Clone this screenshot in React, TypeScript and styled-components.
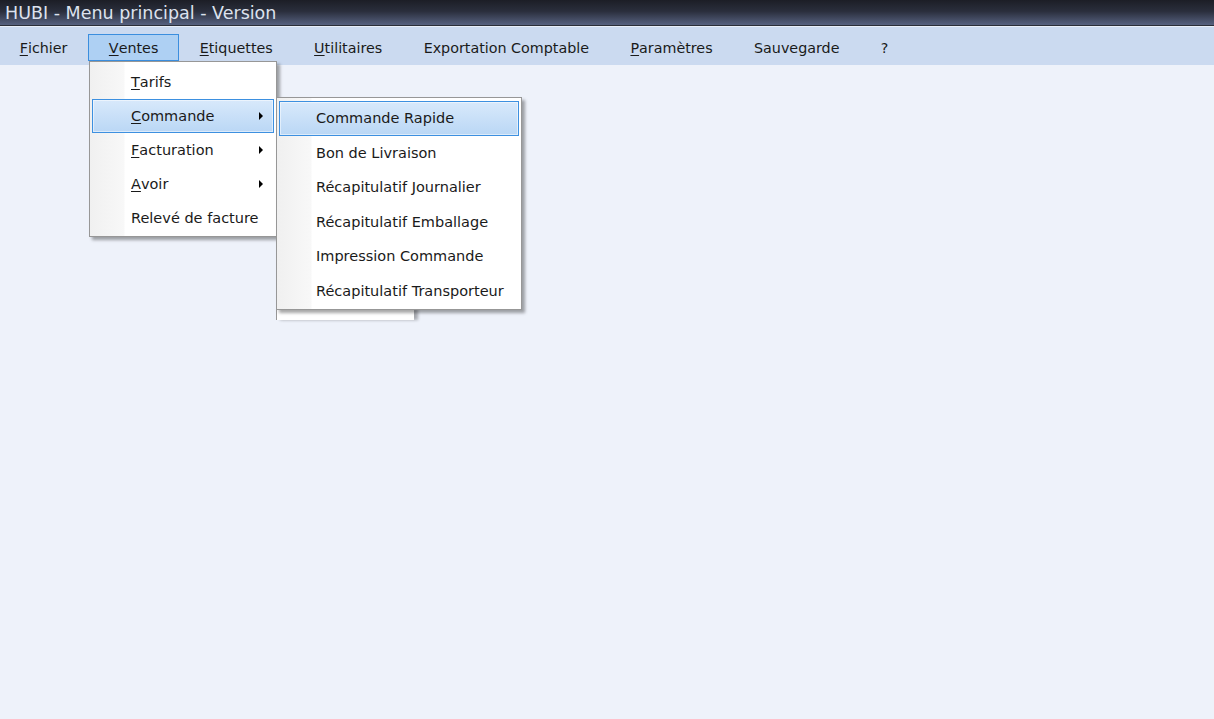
import React from 'react';
import styled, { createGlobalStyle } from 'styled-components';

const GlobalStyle = createGlobalStyle`
    html, body {
        margin: 0;
        padding: 0;
        height: 100%;
    }
    body {
        font-family: "DejaVu Sans", "Liberation Sans", sans-serif;
        background: #eef2fa;
    }
    #root {
        height: 100%;
    }
`;

const Window = styled.div`
    display: flex;
    flex-direction: column;
    height: 100vh;
    overflow: hidden;
`;

const TitleBar = styled.div`
    height: 25px;
    display: flex;
    align-items: center;
    padding-left: 5px;
    background: linear-gradient(#1c1e26 0%, #2a2e3c 45%, #56617f 100%);
    border-bottom: 1px solid #2a2e38;
    color: #dde2ee;
    font-size: 17.5px;
`;

const MenuBar = styled.ul`
    display: flex;
    align-items: center;
    margin: 0 0 0 -1px;
    padding: 0;
    list-style: none;
    height: 38px;
    background: #cbdaf0;
    border-top: 1px solid #e8eef8;
`;

const MenuBarItem = styled.li<{ $active?: boolean }>`
    height: 25px;
    display: flex;
    align-items: center;
    padding: 0 19.7px;
    margin-top: 3px;
    font-size: 14.3px;
    color: #1a1a1a;
    border: 1px solid ${p => (p.$active ? '#3b8ede' : 'transparent')};
    background: ${p => (p.$active ? '#aed0f3' : 'transparent')};
`;

const Key = styled.span`
    text-decoration: underline;
    text-underline-offset: 2px;
`;

const Workspace = styled.div`
    flex: 1;
    position: relative;
    background: #eef2fa;
`;

const Menu = styled.div<{ $left: number; $top: number; $width: number }>`
    position: absolute;
    left: ${p => p.$left}px;
    top: ${p => p.$top}px;
    width: ${p => p.$width}px;
    box-sizing: border-box;
    padding: 3px 1px 1px;
    background: linear-gradient(90deg, #f0f0f0 0, #f8f8f8 34px, #ffffff 35px);
    border: 1px solid #979797;
    box-shadow: 3px 3px 3px rgba(0, 0, 0, 0.35);
    z-index: 2;
`;

const MenuItem = styled.div<{ $height: number; $indent: number; $active?: boolean }>`
    position: relative;
    height: ${p => p.$height}px;
    display: flex;
    align-items: center;
    box-sizing: border-box;
    margin: 0 1px;
    padding-left: ${p => p.$indent}px;
    font-size: 14.5px;
    color: #1a1a1a;
    border: 1px solid ${p => (p.$active ? '#3d90e0' : 'transparent')};
    background: ${p => (p.$active ? 'linear-gradient(#d8e9fb, #bad7f5)' : 'transparent')};
    box-shadow: ${p => (p.$active ? 'inset 0 0 0 1px rgba(255, 255, 255, 0.5)' : 'none')};
`;

const Arrow = styled.span`
    position: absolute;
    right: 10px;
    top: 50%;
    margin-top: -4px;
    width: 0;
    height: 0;
    border-top: 4px solid transparent;
    border-bottom: 4px solid transparent;
    border-left: 4px solid #000;
`;

const Ghost = styled.div`
    position: absolute;
    left: 276px;
    top: 244px;
    width: 137px;
    height: 11px;
    background: #ffffff;
    border-left: 1px solid #979797;
    box-shadow: 4px 0 3px rgba(0, 0, 0, 0.3);
    z-index: 1;
`;

const topItems = ['Fichier', 'Ventes', 'Etiquettes', 'Utilitaires', 'Exportation Comptable', 'Paramètres', 'Sauvegarde', '?'];
const underlined: Record<string, boolean> = { Fichier: true, Ventes: true, Etiquettes: true, Utilitaires: true, 'Paramètres': true };

const mnemonic = (label: string, on: boolean) =>
    on ? (
        <>
            <Key>{label[0]}</Key>
            {label.slice(1)}
        </>
    ) : (
        label
    );

const ventes = [
    { label: 'Tarifs', key: true, sub: false },
    { label: 'Commande', key: true, sub: true, active: true },
    { label: 'Facturation', key: true, sub: true },
    { label: 'Avoir', key: true, sub: true },
    { label: 'Relevé de facture', key: false, sub: false },
];

const commande = [
    'Commande Rapide',
    'Bon de Livraison',
    'Récapitulatif Journalier',
    'Récapitulatif Emballage',
    'Impression Commande',
    'Récapitulatif Transporteur',
];

const App = () => {
    return (
        <Window>
            <GlobalStyle />
            <TitleBar>HUBI - Menu principal - Version</TitleBar>
            <MenuBar>
                {topItems.map(t => (
                    <MenuBarItem key={t} $active={t === 'Ventes'}>
                        {mnemonic(t, !!underlined[t])}
                    </MenuBarItem>
                ))}
            </MenuBar>
            <Workspace>
                <Menu $left={89} $top={-4} $width={188}>
                    {ventes.map(v => (
                        <MenuItem key={v.label} $height={34} $indent={38} $active={v.active}>
                            {mnemonic(v.label, v.key)}
                            {v.sub && <Arrow />}
                        </MenuItem>
                    ))}
                </Menu>
                <Menu $left={276} $top={32} $width={246}>
                    {commande.map((c, i) => (
                        <MenuItem key={c} $height={34.5} $indent={36} $active={i === 0}>
                            {c}
                        </MenuItem>
                    ))}
                </Menu>
                <Ghost />
            </Workspace>
        </Window>
    );
};

export default App;
